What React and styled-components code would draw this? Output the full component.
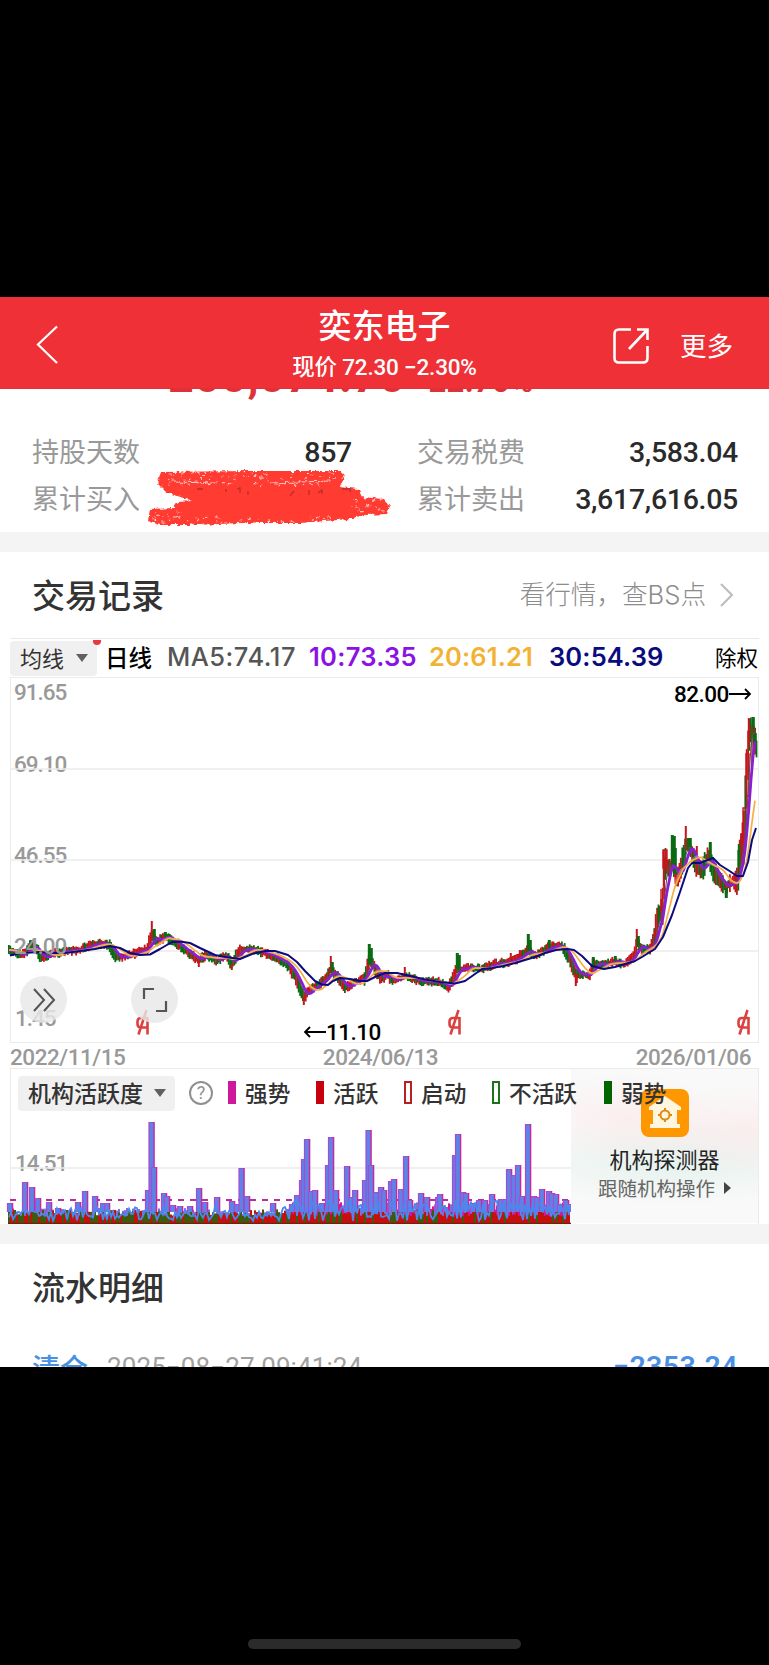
import React from 'react';
import styled, { createGlobalStyle } from 'styled-components';

const CJK = '"Noto Sans CJK SC", sans-serif';
const DIN = `Roboto, ${CJK}`;

const GlobalStyle = createGlobalStyle`
  *, *::before, *::after { box-sizing: border-box; }
  body { margin: 0; background: #000; font-family: ${CJK}; }
  svg { display: block; }
`;

const Screen = styled.div`
  width: 769px;
  height: 1665px;
  background: #000;
  padding-top: 297px;
  display: flex;
  flex-direction: column;
  overflow: hidden;
`;

const Header = styled.header`
  height: 92px;
  flex: none;
  background: #ef3037;
  color: #fff;
  display: grid;
  grid-template-columns: 292px 1fr 292px;
  border-bottom: 1px solid #dc3238;
`;
const BackButton = styled.div`
  padding: 28px 0 0 36px;
`;
const HeaderTitle = styled.div`
  text-align: center;
  white-space: nowrap;
  padding-top: 7px;
`;
const StockName = styled.div`
  font: 500 33px/40px ${CJK};
`;
const StockPrice = styled.div`
  font: 500 22.5px/26px ${DIN};
  letter-spacing: -0.2px;
  margin-top: 10px;
`;
const HeaderActions = styled.div`
  display: flex;
  align-items: flex-start;
  padding: 30px 0 0 135px;
`;
const MoreLabel = styled.span`
  font: 400 26.5px/36px ${CJK};
  margin-left: 30px;
`;

const Summary = styled.section`
  height: 143px;
  flex: none;
  background: #fff;
  overflow: hidden;
`;
const ProfitLine = styled.div`
  height: 41px;
  display: flex;
  align-items: baseline;
  padding-left: 168px;
  margin-top: -37px;
  margin-bottom: 36px;
  color: #dc3238;
  font-family: Roboto, sans-serif;
  font-weight: 700;
  line-height: 50px;
`;
const ProfitAmount = styled.span`
  font-size: 45px;
  letter-spacing: 0.7px;
  width: 243px;
`;
const ProfitRate = styled.span`
  font-size: 31px;
  letter-spacing: 0.3px;
`;
const StatGrid = styled.div`
  display: grid;
  grid-template-columns: 320px 321px;
  grid-auto-rows: 47px;
  column-gap: 65px;
  padding-left: 32px;
`;
const Stat = styled.div`
  display: flex;
  justify-content: space-between;
  align-items: center;
  position: relative;
`;
const StatLabel = styled.span`
  font: 400 27px/40px ${CJK};
  color: #999;
  margin-top: -3px;
`;
const StatValue = styled.span`
  font: 500 28.5px/40px ${DIN};
  letter-spacing: -0.3px;
  color: #2a2a2a;
`;
const Redaction = styled.svg`
  position: absolute;
  left: 112px;
  top: -8px;
  overflow: visible;
`;

const Divider = styled.div`
  height: 20px;
  flex: none;
  background: #f4f4f4;
`;

const Records = styled.section`
  height: 672px;
  flex: none;
  background: #fff;
`;
const SectionHead = styled.div`
  height: 86px;
  display: flex;
  align-items: center;
  justify-content: space-between;
  padding: 0 36px 0 32px;
`;
const SectionTitle = styled.h2`
  margin: -3px 0 0;
  font: 500 33px/44px ${CJK};
  color: #333;
`;
const SectionLink = styled.div`
  display: flex;
  align-items: center;
  gap: 14px;
  font: 300 25.6px/36px Inter, ${CJK};
  color: #8c8c8c;
  white-space: nowrap;
`;

const ChartFrame = styled.div`
  margin: 0 10px;
  width: 749px;
`;
const ChartToolbar = styled.div`
  height: 39px;
  border-top: 1px solid #e9e9e9;
  display: flex;
  align-items: center;
  white-space: nowrap;
`;
const DropButton = styled.div`
  display: flex;
  align-items: center;
  justify-content: space-between;
  width: ${(p) => p.$w}px;
  height: 35px;
  padding: 0 9px 0 10px;
  background: #f0f0f0;
  border-radius: 4px;
  color: #333;
  font: ${(p) => p.$weight || 400} ${(p) => p.$size}px/33px ${CJK};
  padding-bottom: 2px;
  position: relative;
`;
const Dot = styled.i`
  position: absolute;
  right: -4px;
  top: -1px;
  width: 8px;
  height: 5px;
  background: #e63946;
  border-radius: 0 0 4px 4px;
`;
const Caret = styled.i`
  border: 6px solid transparent;
  border-top: 8px solid #606060;
  border-bottom: 0;
  margin-top: 1px;
`;
const Period = styled.span`
  font: 500 23.5px/36px ${CJK};
  color: #000;
  width: 70px;
  padding-left: 8px;
  margin-top: -3px;
`;
const MaValue = styled.span`
  font: ${(p) => p.$weight || 600} 25.5px/36px Inter, sans-serif;
  color: ${(p) => p.$color};
  width: ${(p) => p.$w}px;
  letter-spacing: ${(p) => p.$ls || 0.15}px;
  margin-top: -2px;
`;
const Adjust = styled.span`
  font: 400 21.5px/36px ${CJK};
  color: #000;
  margin: -2px 1px 0 auto;
`;

const Plot = styled.div`
  height: 366px;
  position: relative;
  border: 1.5px solid #ebebeb;
`;
const PlotSvg = styled.svg`
  position: absolute;
  left: -1px;
  top: -1px;
  overflow: visible;
`;
const AxisLabel = styled.span`
  position: absolute;
  left: ${(p) => p.$x}px;
  top: ${(p) => p.$y}px;
  font: 500 22.5px/24px Roboto, sans-serif;
  letter-spacing: -1px;
  color: #999;
`;
const PriceMark = styled.span`
  position: absolute;
  left: ${(p) => p.$x}px;
  top: ${(p) => p.$y}px;
  display: flex;
  align-items: center;
  font: 500 22.5px/24px Roboto, sans-serif;
  letter-spacing: -0.5px;
  color: #000;
`;
const RoundButton = styled.div`
  position: absolute;
  left: ${(p) => p.$x}px;
  top: 298px;
  width: 47px;
  height: 47px;
  border-radius: 50%;
  background: rgba(232, 232, 232, 0.82);
  display: grid;
  place-items: center;
`;
const ExRight = styled.svg`
  position: absolute;
  left: ${(p) => p.$x}px;
  top: 331px;
`;
const DateRow = styled.div`
  height: 25px;
  display: flex;
  justify-content: space-between;
  padding: 2px 8px 0 0;
  font: 500 22.5px/24px Roboto, sans-serif;
  letter-spacing: -0.45px;
  color: #999;
`;
const Activity = styled.div`
  height: 156px;
  position: relative;
  border: 1.5px solid #ebebeb;
  border-bottom: 0;
`;
const ActivityHead = styled.div`
  position: relative;
  z-index: 2;
  display: flex;
  align-items: center;
  padding: 7px 0 0 7px;
  white-space: nowrap;
`;
const Help = styled.span`
  width: 24px;
  height: 24px;
  border: 2px solid #909090;
  border-radius: 50%;
  margin: -1px 15px 0 14px;
  font: 400 18px/20px Roboto, sans-serif;
  text-align: center;
  color: #909090;
`;
const Legend = styled.span`
  display: flex;
  align-items: center;
  gap: 9px;
  width: ${(p) => p.$w}px;
  font: 500 22.7px/33px ${CJK};
  padding-bottom: 2px;
  color: #333;
  &::before {
    content: '';
    width: 8px;
    height: 23px;
    border: 2px solid ${(p) => p.$color};
    background: ${(p) => (p.$hollow ? '#fff' : p.$color)};
  }
`;
const Detector = styled.div`
  position: absolute;
  right: 0;
  top: 0;
  width: 187px;
  height: 154px;
  padding-top: 20px;
  background:
    radial-gradient(ellipse 100px 46px at 30% 32%, rgba(253, 228, 230, 0.55), transparent),
    radial-gradient(ellipse 110px 46px at 95% 40%, rgba(253, 228, 230, 0.55), transparent),
    radial-gradient(ellipse 170px 45px at 55% 60%, rgba(222, 239, 233, 0.75), transparent),
    #f9f9f9;
  display: flex;
  flex-direction: column;
  align-items: center;
`;
const DetectorName = styled.div`
  font: 400 22px/30px ${CJK};
  color: #222;
  margin-top: 6px;
`;
const DetectorHint = styled.div`
  display: flex;
  align-items: center;
  gap: 9px;
  font: 400 19.5px/28px ${CJK};
  color: #666;
  margin-top: 1px;
  white-space: nowrap;
  &::after {
    content: '';
    border: 6px solid transparent;
    border-left: 7px solid #444;
    border-right: 0;
  }
`;

const Details = styled.section`
  height: 123px;
  flex: none;
  background: #fff;
  overflow: hidden;
`;
const DetailRow = styled.div`
  display: flex;
  align-items: center;
  height: 40px;
  margin-top: 15px;
  padding: 4px 31px 0 32px;
  white-space: nowrap;
`;
const TradeKind = styled.span`
  font: 500 28px/40px ${CJK};
  color: #4a90e2;
  width: 75px;
`;
const TradeTime = styled.span`
  font: 400 26px/40px Roboto, sans-serif;
  letter-spacing: 0.1px;
  color: #a0a0a0;
`;
const TradeAmount = styled.span`
  font: 600 28.5px/40px Roboto, sans-serif;
  letter-spacing: 0.4px;
  color: #4a90e2;
  margin-left: auto;
`;
const HomeBar = styled.div`
  width: 273px;
  height: 10px;
  flex: none;
  border-radius: 5px;
  background: #2b2b2b;
  margin: 272px auto 0 248px;
`;

/* ---------- chart data ---------- */
const seeded = (seed) => {
  let s = seed;
  return () => {
    s = (s * 1664525 + 1013904223) % 4294967296;
    return s / 4294967296;
  };
};
const sample = (pts, x) => {
  let i = 0;
  while (i < pts.length - 2 && pts[i + 1][0] < x) i += 1;
  const [a, b] = [pts[i], pts[i + 1]];
  const t = Math.max(0, Math.min(1, (x - a[0]) / (b[0] - a[0])));
  return a[1] + (b[1] - a[1]) * t;
};
const ma30 = [[10,955.5],[20,953],[40,952],[50,953],[65,953],[80,951],[95,949],[110,946],[120,948],[130,953],[140,955],[150,954.5],[160,949],[172,942],[180,941.5],[190,943],[200,948],[215,955],[225,957],[240,959],[252,954],[265,951],[275,951],[288,955],[297,962],[305,971],[315,981],[322,984.5],[328,985],[333,981],[340,978],[350,979],[360,981],[367,981],[375,977],[385,973],[397,973],[410,976],[425,979.5],[440,982],[455,983.5],[465,981],[475,974],[482,969],[492,968],[503,966],[515,963],[525,960],[535,957],[545,953],[556,950],[567,949],[574,950],[582,956],[592,966],[604,969],[615,967],[625,964],[635,961],[642,957],[650,952],[655,949],[663,937],[672,915],[680,892],[688,868],[692,863],[700,863],[713,858],[720,865],[728,870],[737,876],[743,876],[748,862],[752,840],[756,828]];
const price = [[9,950],[20,955],[27,952],[31,945],[37,950],[41,958],[50,955],[65,951],[80,950],[95,944],[108,944],[112,950],[116,957],[125,957],[140,951],[148,949],[151,936],[153,936],[157,942],[165,936],[172,940],[185,950],[198,960],[207,955],[217,961],[226,955],[232,964],[240,950],[250,949],[262,952],[275,957],[288,965],[296,978],[304,997],[310,990],[318,985],[327,977],[331,970],[336,975],[345,988],[355,982],[365,978],[369,962],[372,962],[376,972],[382,979],[388,974],[392,981],[405,976],[420,981],[440,982],[448,988],[455,975],[457,966],[460,970],[470,967],[482,969],[495,964],[510,962],[520,957],[528,950],[535,956],[550,947],[562,946],[570,960],[576,974],[582,974],[590,975],[594,963],[605,965],[615,961],[625,964],[634,956],[637,943],[642,949],[650,949],[654,940],[658,918],[663,905],[665,862],[669,870],[673,862],[677,880],[681,868],[686,846],[690,847],[697,868],[703,870],[708,855],[715,874],[726,888],[731,882],[737,882],[740,855],[744,835],[747,775],[750,728],[753,732],[757,750]];
const spikes = [[31,940,'g'],[152,921,'r'],[154,929,'g'],[165,932,'g'],[199,964,'r'],[232,967,'r'],[304,1002,'r'],[331,956,'r'],[332,962,'g'],[369,944,'g'],[371,948,'g'],[405,967,'r'],[457,953,'g'],[459,955,'g'],[511,953,'r'],[520,950,'r'],[528,934,'g'],[530,940,'g'],[549,940,'g'],[576,983,'r'],[577,980,'r'],[593,957,'g'],[615,956,'g'],[637,929,'r'],[638,936,'g'],[655,930,'r'],[659,907,'g'],[664,850,'r'],[666,850,'r'],[672,835,'g'],[674,836,'g'],[675,848,'g'],[686,826,'r'],[688,838,'g'],[690,838,'g'],[697,846,'r'],[710,842,'g'],[726,895,'g'],[739,844,'g'],[742,833,'r'],[749,718,'r'],[753,717,'g'],[755,733,'g']];
const average = (n) => {
  const out = [];
  for (let x = 9; x <= 756; x += 2) {
    let total = 0;
    for (let k = 0; k < n; k += 1) total += sample(price, Math.max(9, x - k));
    out.push([x, total / n]);
  }
  return out;
};
const line = (pts) => pts.map(([x, y]) => `${x},${y.toFixed(1)}`).join(' ');
const candles = (() => {
  const rnd = seeded(17);
  const out = [];
  for (let x = 9; x < 757; x += 1.4) {
    const a = sample(price, x - 2);
    const b = sample(price, x + 2);
    const steep = x > 655 ? 8 : 2.4;
    const mid = sample(price, x) + (rnd() - 0.5) * 2;
    const half = 2.2 + rnd() * steep + Math.abs(a - b) * 0.35;
    const up = a > b ? rnd() > 0.25 : rnd() > 0.68;
    out.push({ x, y: mid - half, h: half * 2, up });
  }
  return out;
})();

const peaks = [[10,1203],[25,1182],[32,1187],[38,1198],[49,1202],[58,1208],[78,1202],[85,1191],[95,1196],[103,1203],[107,1203],[148,1190],[151.5,1122],[154,1167],[164,1193],[167,1196],[173,1205],[180,1206],[190,1206],[199,1188],[205,1202],[217,1197],[232,1201],[237,1204],[241.5,1168],[247,1196],[273,1203],[292,1204],[297,1195],[302,1180],[304,1159],[307,1139],[311,1191],[315,1190],[322,1203],[328,1165],[331,1137],[336,1190],[347,1166],[351,1197],[355,1190],[365,1180],[368.5,1130],[371,1165],[376,1192],[381,1187],[384,1190],[391,1181],[394,1179],[401,1189],[406,1156],[410,1200],[421,1193],[427,1197],[438,1197],[440,1194],[446,1207],[455,1155],[458,1134],[463,1192],[466,1193],[473,1203],[479,1200],[485,1200],[492,1194],[501,1199],[505,1199],[509,1169],[514,1175],[518,1165],[522,1196],[528,1124],[534,1196],[537,1197],[542,1189],[549,1191],[552,1193],[556,1194],[560,1204],[566,1200],[569,1204]];
const activity = (() => {
  const rnd = seeded(5);
  const base = [];
  const stems = [];
  const wave = [];
  for (let x = 9; x < 571; x += 2) {
    const late = x > 290;
    base.push({ x, top: (late ? 1202 : 1208) + rnd() * 8, hot: late && rnd() > 0.45 });
    wave.push([x, (late ? 1200 : 1207) + rnd() * (late ? 21 : 14)]);
    stems.push({ x, top: 1209 + rnd() * 7, green: rnd() > (late ? 0.68 : 0.42) });
  }
  return { base, stems, wave };
})();

const KLine = () => (
  <PlotSvg width="749" height="366" viewBox="10 677 749 366">
    {[769, 860, 951].map((y) => <path key={y} d={`M10 ${y}H758`} stroke="#ebebeb" strokeWidth="1.5" />)}
    {candles.map((c) => (
      <rect key={c.x} x={c.x - 1} y={c.y} width="1.8" height={c.h} fill={c.up ? '#c4161c' : '#0b6b12'} />
    ))}
    {spikes.map(([x, y, k]) => {
      const p = sample(price, x);
      return <rect key={x} x={x - 1.2} y={Math.min(y, p)} width={k === 'g' ? 3 : 2} height={Math.abs(p - y) + 3} fill={k === 'g' ? '#0b6b12' : '#c4161c'} />;
    })}
    <path d="M663 850h4v18h-4zM661 889v26M746 754h3v42h-3zM743 808h3v20h-3zM741 834h3v30h-3zM748 728h4v38" fill="none" stroke="#c4161c" strokeWidth="1.4" />
    <g fill="none" strokeLinejoin="round">
      <polyline points={line(average(5))} stroke="#555" strokeWidth="1" />
      <polyline points={line(average(9))} stroke="#8a1fd0" strokeWidth="2.8" />
      <polyline points={line(average(18))} stroke="#fff" strokeWidth="2" opacity=".3" />
      <polyline points={line(average(20))} stroke="#f5b041" strokeWidth="1.7" />
      <polyline points={line(ma30)} stroke="#0b0b80" strokeWidth="2" />
    </g>
  </PlotSvg>
);

const ActivityBars = () => (
  <PlotSvg width="749" height="156" viewBox="10 1068 749 156">
    <path d="M10 1168H571" stroke="#ebebeb" strokeWidth="1.5" />
    <path d="M10 1200H571" stroke="#b5309c" strokeWidth="1.8" strokeDasharray="6 6" />
    {activity.base.map((b) => <rect key={b.x} x={b.x - 1} y={b.top} width="2" height={1224 - b.top} fill={b.hot ? '#d6159b' : '#7e6fd8'} />)}
    {activity.stems.map((b) => <rect key={b.x} x={b.x - 1} y={b.top} width="2" height={1224 - b.top} fill={b.green ? '#3f5a0c' : '#c4100f'} />)}
    {peaks.map(([x, y]) => (
      <g key={x}>
        <rect x={x - 2.5} y={y} width="5" height={Math.max(0, 1212 - y)} fill="#5c83e6" />
        <path d={`M${x - 2.5} 1212V${y + 0.5}H${x + 2.5}`} fill="none" stroke="#a94bd0" strokeWidth="1.2" />
        <path d={`M${x + 2.6} ${y}V1212`} stroke="#d0249c" strokeWidth="1.4" />
      </g>
    ))}
    <polyline points={line(activity.wave)} fill="none" stroke="#4a88ee" strokeWidth="1.8" />
    <path d="M8 1223.4H571" stroke="#7c1d0c" strokeWidth="1.4" />
  </PlotSvg>
);

const scribbleSpecks = (() => {
  const rnd = seeded(91);
  const out = [];
  for (let i = 0; i < 190; i += 1) {
    const zone = i % 4;
    if (zone < 2) out.push([158 + rnd() * 184, 473 + rnd() * 13]);
    else if (zone === 2) out.push([150 + rnd() * 190, 517 + rnd() * 8]);
    else out.push(rnd() > 0.5 ? [152 + rnd() * 34, 505 + rnd() * 18] : [350 + rnd() * 36, 492 + rnd() * 22]);
  }
  return out.map(([x, y]) => ({ x, y, w: 0.6 + rnd() * 2.6, h: 0.5 + rnd() * 0.9 }));
})();

const Scribble = () => (
  <Redaction width="246" height="60" viewBox="144 469 246 60">
    <defs>
      <filter id="rough" x="-5%" y="-15%" width="110%" height="130%">
        <feTurbulence type="fractalNoise" baseFrequency="0.22" numOctaves="3" seed="4" />
        <feDisplacementMap in="SourceGraphic" scale="5" xChannelSelector="R" yChannelSelector="G" />
      </filter>
    </defs>
    <g filter="url(#rough)">
      <path fill="#ff3b30" d="M161 473L250 472L341 472L345 479L340 488L358 490L362 498L384 500L390 507L387 515L364 516L350 520L300 524L240 524L200 526L160 526L148 522L150 510L174 509L178 503L192 502L166 493L157 484Z" />
      {scribbleSpecks.map((s, i) => <rect key={i} x={s.x} y={s.y} width={s.w} height={s.h} fill="#fff" opacity=".75" />)}
      <path d="M172 483L215 484M270 484L330 482" stroke="#ffc9c4" strokeWidth="1" />
    </g>
    <path d="M197 490h6M237 490l3-1v5M248 492v4M290 497l4-5M309 491v5M318 494l4-3v4M342 490h9l-1 3M226 490v3" fill="none" stroke="#7d2620" strokeWidth="1.3" opacity=".55" />
  </Redaction>
);

const ExRightMark = ({ x }) => (
  <ExRight $x={x} width="15" height="27" viewBox="0 0 15 27" fill="none" stroke="#dd4040" strokeWidth="2.6">
    <path d="M12.5 8V25.5M12.5 9H6Q2.5 9 2.5 12.5V15Q2.5 18.5 6 18.5H12M11.5 1L3.5 25.5" />
  </ExRight>
);

const Arrow = ({ left }) => (
  <svg width="23" height="14" viewBox="0 0 23 14" fill="none" stroke="#000" strokeWidth="1.8">
    <path d={left ? 'M23 7H2M7 2L2 7L7 12' : 'M0 7H21M16 2L21 7L16 12'} />
  </svg>
);

export default function App() {
  return (
    <Screen>
      <GlobalStyle />
      <Header>
        <BackButton>
          <svg width="22" height="40" viewBox="0 0 22 40" fill="none" stroke="#fff" strokeWidth="2.2"><path d="M21 1.5L2 19.5L21 38" /></svg>
        </BackButton>
        <HeaderTitle>
          <StockName>奕东电子</StockName>
          <StockPrice>现价 72.30 −2.30%</StockPrice>
        </HeaderTitle>
        <HeaderActions>
          <svg width="38" height="38" viewBox="0 0 38 38" fill="none" stroke="#fff" strokeWidth="2.6">
            <path d="M19 2.5H7Q2.5 2.5 2.5 7V31Q2.5 35.5 7 35.5H31Q35.5 35.5 35.5 31V19" />
            <path d="M25 2.5H35.5V13M35 3L17 22" />
          </svg>
          <MoreLabel>更多</MoreLabel>
        </HeaderActions>
      </Header>

      <Summary>
        <ProfitLine>
          <ProfitAmount>200,074.70</ProfitAmount>
          <ProfitRate>−22.70%</ProfitRate>
        </ProfitLine>
        <StatGrid>
          <Stat><StatLabel>持股天数</StatLabel><StatValue>857</StatValue></Stat>
          <Stat><StatLabel>交易税费</StatLabel><StatValue>3,583.04</StatValue></Stat>
          <Stat><StatLabel>累计买入</StatLabel><Scribble /></Stat>
          <Stat><StatLabel>累计卖出</StatLabel><StatValue>3,617,616.05</StatValue></Stat>
        </StatGrid>
      </Summary>
      <Divider />

      <Records>
        <SectionHead>
          <SectionTitle>交易记录</SectionTitle>
          <SectionLink>
            看行情，查BS点
            <svg width="13" height="24" viewBox="0 0 13 24" fill="none" stroke="#bdbdbd" strokeWidth="2.2"><path d="M1 1L12 12L1 23" /></svg>
          </SectionLink>
        </SectionHead>
        <ChartFrame>
          <ChartToolbar>
            <DropButton $w={87} $size={22}>均线<Caret /><Dot /></DropButton>
            <Period>日线</Period>
            <MaValue $color="#555" $weight={500} $w={142} $ls={0.5}>MA5:74.17</MaValue>
            <MaValue $color="#8a12e6" $w={120} $ls={0.3}>10:73.35</MaValue>
            <MaValue $color="#f2b233" $w={120}>20:61.21</MaValue>
            <MaValue $color="#0b0b80" $w={115}>30:54.39</MaValue>
            <Adjust>除权</Adjust>
          </ChartToolbar>
          <Plot>
            <AxisLabel $x={3} $y={2}>91.65</AxisLabel>
            <AxisLabel $x={3} $y={74}>69.10</AxisLabel>
            <AxisLabel $x={3} $y={165}>46.55</AxisLabel>
            <KLine />
            <AxisLabel $x={3} $y={256}>24.00</AxisLabel>
            <AxisLabel $x={4} $y={328}>1.45</AxisLabel>
            <PriceMark $x={663} $y={4}>82.00<Arrow /></PriceMark>
            <PriceMark $x={292} $y={342}><Arrow left />11.10</PriceMark>
            <ExRightMark x={124} />
            <ExRightMark x={436} />
            <ExRightMark x={725} />
            <RoundButton $x={9}>
              <svg width="24" height="24" viewBox="0 0 24 24" fill="none" stroke="#555" strokeWidth="2"><path d="M2 1L12 12L2 23M12 1L22 12L12 23" /></svg>
            </RoundButton>
            <RoundButton $x={120}>
              <svg width="26" height="26" viewBox="0 0 26 26" fill="none" stroke="#555" strokeWidth="2.2"><path d="M2 12V2H12M24 14V24H14" /></svg>
            </RoundButton>
          </Plot>
          <DateRow><span>2022/11/15</span><span>2024/06/13</span><span>2026/01/06</span></DateRow>
          <Activity>
            <AxisLabel $x={4} $y={82}>14.51</AxisLabel>
            <ActivityBars />
            <Detector>
              <svg width="48" height="48" viewBox="0 0 48 48">
                <rect width="48" height="48" rx="8" fill="#ff9800" />
                <path d="M24 7L40 18V21H36V35H39V39H9V35H12V21H8V18Z" fill="#fff6e0" />
                <circle cx="24" cy="26" r="4.5" fill="none" stroke="#e08a10" strokeWidth="2" />
                <path d="M24 19V22M24 30V33M17 26H20M28 26H31" stroke="#e08a10" strokeWidth="2" />
              </svg>
              <DetectorName>机构探测器</DetectorName>
              <DetectorHint>跟随机构操作</DetectorHint>
            </Detector>
            <ActivityHead>
              <DropButton $w={157} $size={23} $weight={500}>机构活跃度<Caret /></DropButton>
              <Help>?</Help>
              <Legend $color="#d0189c" $w={88}>强势</Legend>
              <Legend $color="#c8000c" $w={88}>活跃</Legend>
              <Legend $color="#b82020" $hollow $w={88}>启动</Legend>
              <Legend $color="#1b741b" $hollow $w={112}>不活跃</Legend>
              <Legend $color="#006400" $w={70}>弱势</Legend>
            </ActivityHead>
          </Activity>
        </ChartFrame>
      </Records>
      <Divider />

      <Details>
        <SectionHead><SectionTitle>流水明细</SectionTitle></SectionHead>
        <DetailRow>
          <TradeKind>清仓</TradeKind>
          <TradeTime>2025−08−27 09:41:24</TradeTime>
          <TradeAmount>−2353.24</TradeAmount>
        </DetailRow>
      </Details>
      <HomeBar />
    </Screen>
  );
}
